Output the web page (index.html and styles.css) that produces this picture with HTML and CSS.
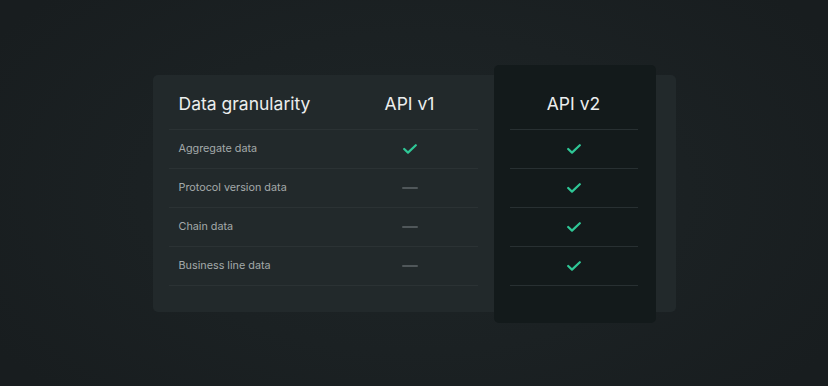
FILE: index.html
```html
<!DOCTYPE html>
<html lang="en">
<head>
    <meta charset="UTF-8">
    <meta name="viewport" content="width=device-width, initial-scale=1.0">
    <title>API v1 vs API v2</title>
    <link rel="stylesheet" href="styles.css">
</head>
<body>
    <div class="card">
        <div class="table-left">
            <div class="row head">
                <div class="label">Data granularity</div>
                <div class="cell">API v1</div>
            </div>
            <div class="row">
                <div class="label">Aggregate data</div>
                <div class="cell"><svg class="check" width="14" height="10" viewBox="0 0 14 10"><path d="M1.2 5 L5 8.6 L12.8 1.2"/></svg></div>
            </div>
            <div class="row">
                <div class="label">Protocol version data</div>
                <div class="cell"><span class="dash"></span></div>
            </div>
            <div class="row">
                <div class="label">Chain data</div>
                <div class="cell"><span class="dash"></span></div>
            </div>
            <div class="row">
                <div class="label">Business line data</div>
                <div class="cell"><span class="dash"></span></div>
            </div>
        </div>

        <div class="col-v2">
            <div class="row head">
                <div class="cell">API v2</div>
            </div>
            <div class="row">
                <div class="cell"><svg class="check" width="14" height="10" viewBox="0 0 14 10"><path d="M1.2 5 L5 8.6 L12.8 1.2"/></svg></div>
            </div>
            <div class="row">
                <div class="cell"><svg class="check" width="14" height="10" viewBox="0 0 14 10"><path d="M1.2 5 L5 8.6 L12.8 1.2"/></svg></div>
            </div>
            <div class="row">
                <div class="cell"><svg class="check" width="14" height="10" viewBox="0 0 14 10"><path d="M1.2 5 L5 8.6 L12.8 1.2"/></svg></div>
            </div>
            <div class="row">
                <div class="cell"><svg class="check" width="14" height="10" viewBox="0 0 14 10"><path d="M1.2 5 L5 8.6 L12.8 1.2"/></svg></div>
            </div>
        </div>
    </div>
</body>
</html>
```

FILE: styles.css
```css
html, body {
    margin: 0;
    height: 100%;
}

body {
    display: flex;
    align-items: center;
    justify-content: center;
    background: radial-gradient(ellipse 60% 75% at 50% 50%, #1e2527 0%, #1b2123 55%, #181d1f 100%);
    font-family: Inter, "Noto Sans", sans-serif;
    color: #e4e7e7;
}

.card {
    display: flex;
    width: 487px;
    padding: 0 20px 0 16px;
    background-color: #22292b;
    border-radius: 5px;
}

.table-left {
    flex: 1;
    padding-bottom: 26px;
}

.row {
    display: flex;
    align-items: center;
    height: 38px;
    border-bottom: 1px solid #2b3234;
}

.row.head {
    height: 50px;
    padding-top: 4px;
    font-size: 17.5px;
    color: #eceeee;
}

.label {
    flex: 1;
    padding-left: 10px;
    font-size: 10.8px;
    color: #a4a9aa;
}

.row.head .label {
    font-size: 17.5px;
    color: #eceeee;
}

.cell {
    width: 136px;
    display: flex;
    justify-content: center;
    align-items: center;
}

.col-v2 {
    width: 128px;
    margin: -10px 0 -11px 16px;
    padding: 10px 18px 37px 16px;
    background-color: #131a1b;
    border-radius: 5px;
}

.col-v2 .row {
    border-bottom-color: #283032;
}

.col-v2 .cell {
    width: 100%;
}

.check {
    display: block;
    margin-top: 1px;
}

.check path {
    fill: none;
    stroke: #2fc796;
    stroke-width: 2.2;
    stroke-linecap: round;
    stroke-linejoin: round;
}

.dash {
    display: block;
    width: 16px;
    height: 2px;
    border-radius: 1px;
    background-color: #50575a;
}
```
